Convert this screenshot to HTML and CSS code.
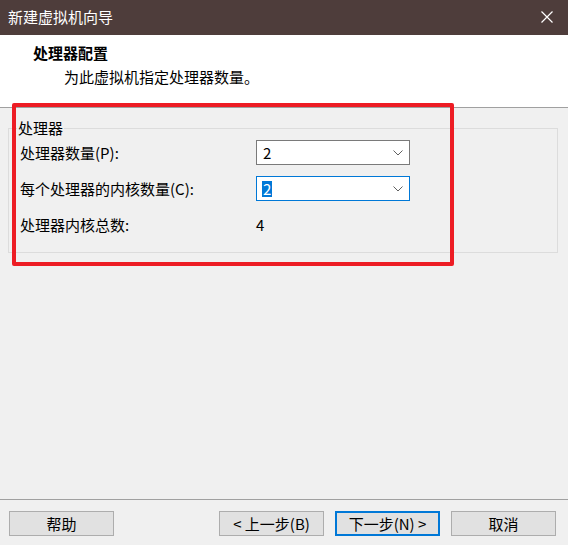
FILE: index.html
```html
<!DOCTYPE html>
<html lang="zh-CN">
<head>
<meta charset="utf-8">
<title>新建虚拟机向导</title>
<link rel="stylesheet" href="styles.css">
</head>
<body>
<div class="window">
  <div class="titlebar">
    <span class="title">新建虚拟机向导</span>
    <svg class="close" width="12" height="12" viewBox="0 0 12 12"><path d="M0.5 0.5 L11.5 11.5 M11.5 0.5 L0.5 11.5" stroke="#ffffff" stroke-width="1.2" fill="none"/></svg>
  </div>
  <div class="header">
    <div class="h-title">处理器配置</div>
    <div class="h-sub">为此虚拟机指定处理器数量。</div>
  </div>
  <div class="content">
    <fieldset class="group">
      <legend class="legend">处理器</legend>
      <div class="grid">
        <div class="label">处理器数量(P):</div>
        <div class="combo"><span class="val">2</span><svg class="chev" width="10" height="6" viewBox="0 0 10 6"><path d="M0.5 0.5 L5 5 L9.5 0.5" stroke="#606060" stroke-width="1" fill="none"/></svg></div>
        <div class="label">每个处理器的内核数量(C):</div>
        <div class="combo focus"><span class="val sel">2</span><svg class="chev" width="10" height="6" viewBox="0 0 10 6"><path d="M0.5 0.5 L5 5 L9.5 0.5" stroke="#606060" stroke-width="1" fill="none"/></svg></div>
        <div class="label">处理器内核总数:</div>
        <div class="total">4</div>
      </div>
    </fieldset>
  </div>
  <div class="footer">
    <button class="btn">帮助</button>
    <div class="btns">
      <button class="btn">&lt; 上一步(B)</button>
      <button class="btn primary">下一步(N) &gt;</button>
      <button class="btn">取消</button>
    </div>
  </div>
  <div class="annot"></div>
</div>
</body>
</html>
```
FILE: styles.css
```css
* { box-sizing: border-box; }
html, body { margin: 0; padding: 0; }
body {
  background: #f0f0f0;
  font-family: "Noto Sans CJK SC", "Noto Sans", sans-serif;
  font-size: 15px;
  color: #000;
}
.window {
  position: relative;
  width: 568px;
  height: 545px;
  display: flex;
  flex-direction: column;
}
.titlebar {
  height: 35px;
  flex: none;
  background: #4e3d3b;
  color: #fff;
  display: flex;
  align-items: center;
  justify-content: space-between;
  padding: 0 15px 2px 8px;
  line-height: 20px;
}
.close { margin-top: 1px; }
.header {
  background: #fff;
  border-bottom: 1px solid #a0a0a0;
  padding: 8px 0 0 0;
  height: 73px;
  flex: none;
}
.h-title {
  font-weight: bold;
  line-height: 20px;
  padding-left: 33px;
}
.h-sub {
  line-height: 20px;
  margin-top: 4px;
  padding-left: 64px;
}
.content { flex: 1; }
.group {
  margin: 10px 10px 0 8px;
  border: 1px solid #dcdcdc;
  padding: 0 0 15px 11px;
  min-width: 0;
}
.legend {
  margin-left: -3px;
  padding: 0 1px;
  line-height: 20px;
}
.grid {
  display: grid;
  grid-template-columns: 236px 154px;
  grid-auto-rows: 25px;
  row-gap: 11px;
  align-items: center;
  margin-top: 2px;
}
.label { line-height: 20px; }
.combo {
  height: 25px;
  background: #fff;
  border: 1px solid #7a7a7a;
  display: flex;
  align-items: center;
  justify-content: space-between;
  padding: 0 6px 0 5px;
  line-height: 16px;
}
.combo.focus { border-color: #0078d7; }
.val { display: inline-block; padding: 0 1px; }
.val.sel { background: #0078d7; color: #fff; }
.chev { margin-top: 1px; }
.total { line-height: 20px; }
.footer {
  border-top: 1px solid #a0a0a0;
  padding: 11px 12px 9px 9px;
  display: flex;
  justify-content: space-between;
  flex: none;
}
.btns { display: flex; gap: 11px; }
.btn {
  width: 105px;
  height: 25px;
  background: #e1e1e1;
  border: 1px solid #adadad;
  font-family: "Noto Sans CJK SC", "Noto Sans", sans-serif;
  font-size: 15px;
  color: #000;
  padding: 0;
  line-height: 20px;
}
.btn.primary { border: 2px solid #0078d7; }
.annot {
  position: absolute;
  left: 12px;
  top: 103px;
  width: 442px;
  height: 163px;
  border: 4px solid #ed1c24;
  border-radius: 2px;
  pointer-events: none;
}
```
